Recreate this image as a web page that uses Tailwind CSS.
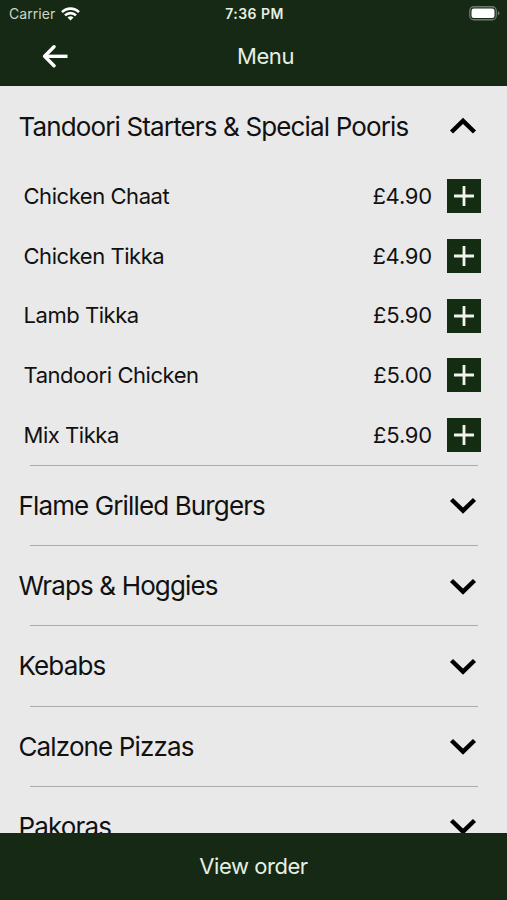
<!DOCTYPE html>
<html lang="en">

<head>
    <meta charset="UTF-8" />
    <meta name="viewport" content="width=device-width, initial-scale=1.0" />
    <script src="https://cdn.jsdelivr.net/npm/@tailwindcss/browser@4"></script>
    <title>Menu</title>
</head>

<body class="bg-[#e9e9e9] text-[#111] font-['Inter','Liberation_Sans',sans-serif]">
    <div class="h-[900px] w-[507px] flex flex-col overflow-hidden">
        <header class="h-[86px] shrink-0 bg-[#152914] text-[#e6efe4]">
            <!-- Status bar -->
            <div class="h-[27px] grid grid-cols-3 items-center pl-[9px] pr-[7px] text-[14px]">
                <div class="flex items-center gap-[6px] text-[#ccd6ca]">
                    <span class="tracking-[0.05px]">Carrier</span>
                    <svg class="w-[19px] h-[14px]" viewBox="0 0 19 14" fill="none" stroke="#fff" stroke-width="2.6">
                        <path d="M1 5.2a12 12 0 0 1 17 0" />
                        <path d="M4 8.4a7.8 7.8 0 0 1 11 0" />
                        <path d="M9.5 13.6 6.5 10.6a4.3 4.3 0 0 1 6 0z" fill="#fff" stroke="none" />
                    </svg>
                </div>
                <div class="text-center font-semibold tracking-[0.45px]">7:36 PM</div>
                <svg class="w-[31px] h-[15px] justify-self-end" viewBox="0 0 31 15">
                    <rect x="0.75" y="0.75" width="26.5" height="13" rx="4" fill="none" stroke="#6b7a6a" stroke-width="1.3" />
                    <rect x="2.5" y="2.5" width="23" height="9.5" rx="2.2" fill="#fff" />
                    <path d="M28.8 5v4.5q1.7-.6 1.7-2.25T28.8 5z" fill="#6b7a6a" />
                </svg>
            </div>
            <div class="h-[59px] grid grid-cols-[1fr_auto_1fr] items-center pl-[42px] pr-[18px]">
                <svg class="w-[26px] h-[24px]" viewBox="0 0 26 24" fill="none" stroke="#fff" stroke-width="3.4" stroke-linecap="round" stroke-linejoin="round">
                    <path d="M12 1.8 2.6 11.3l9.4 9.5" />
                    <path d="M3 11.3h22.5" stroke-linecap="butt" />
                </svg>
                <h1 class="text-[22px] tracking-[-0.4px]">Menu</h1>
            </div>
        </header>

        <main class="flex-1 min-h-0 overflow-hidden">
            <div class="h-[80.5px] flex items-center justify-between pl-[18.5px] pr-[30px]">
                <h2 class="text-[26px] tracking-[-0.86px] whitespace-nowrap">Tandoori Starters &amp; Special Pooris</h2>
                <svg class="w-[28px] h-[18px]" viewBox="0 0 28 18" fill="none" stroke="#000" stroke-width="4.4">
                    <path d="M2.5 15 14 3.8l11.5 11.2" />
                </svg>
            </div>
            <div id="items"></div>
            <div id="sections"></div>
        </main>

        <footer class="h-[67px] shrink-0 flex items-center justify-center bg-[#152914] text-[#e6efe4] text-[22px] tracking-[-0.45px]">
            <button>View order</button>
        </footer>
    </div>

    <script>
        const items = [
            { name: "Chicken Chaat", price: "£4.90" },
            { name: "Chicken Tikka", price: "£4.90" },
            { name: "Lamb Tikka", price: "£5.90" },
            { name: "Tandoori Chicken", price: "£5.00" },
            { name: "Mix Tikka", price: "£5.90" },
        ];
        const sections = ["Flame Grilled Burgers", "Wraps & Hoggies", "Kebabs", "Calzone Pizzas", "Pakoras"];

        document.getElementById("items").innerHTML = items.map((item) => `
            <div class="h-[59.7px] flex items-center pl-[23.5px] pr-[26px] text-[22px]">
                <span class="flex-1 tracking-[-0.45px]">${item.name}</span>
                <span class="mr-[15px] tracking-[-0.2px]">${item.price}</span>
                <button class="size-[34px] bg-[#142d12] flex items-center justify-center">
                    <svg class="size-5" viewBox="0 0 20 20" stroke="#f0f4ec" stroke-width="2.8">
                        <path d="M10 0v20M0 10h20" />
                    </svg>
                </button>
            </div>
        `).join("");

        document.getElementById("sections").innerHTML = sections.map((name) => `
            <div class="h-[80.2px]">
                <div class="h-px ml-[30px] mr-[29px] bg-[#acacac]"></div>
                <div class="h-[79px] flex items-center justify-between pl-[18.5px] pr-[30px]">
                    <h2 class="text-[26px] tracking-[-0.87px]">${name.replace("&", "&amp;")}</h2>
                    <svg class="w-[28px] h-[18px]" viewBox="0 0 28 18" fill="none" stroke="#000" stroke-width="4.4">
                        <path d="M2.5 3.5 14 14.7 25.5 3.5" />
                    </svg>
                </div>
            </div>
        `).join("");
    </script>
</body>

</html>
